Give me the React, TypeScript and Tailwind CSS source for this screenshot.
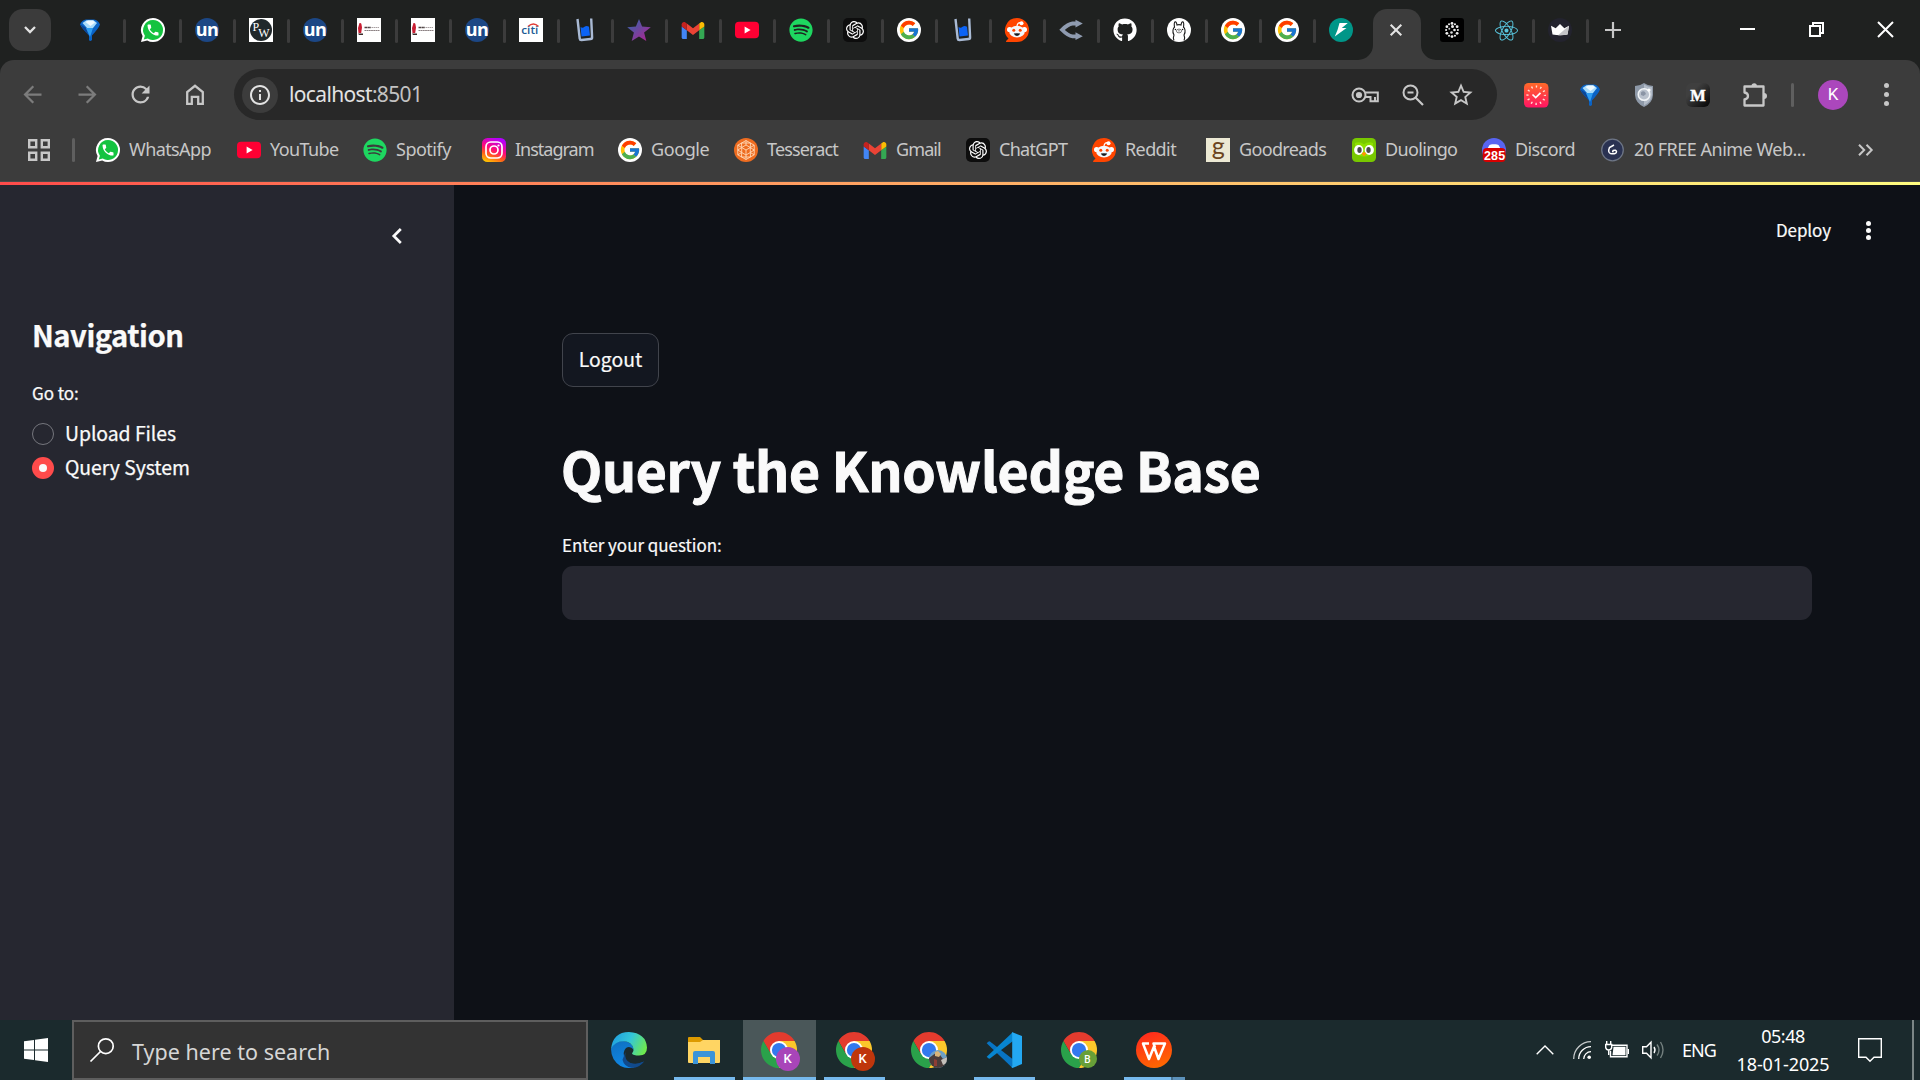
import React, { useId } from "react";
import { FcGoogle } from "react-icons/fc";
import { FaSpotify, FaGithub, FaReact } from "react-icons/fa";
import { SiOpenai } from "react-icons/si";
import {
  MdArrowBack,
  MdArrowForward,
  MdRefresh,
  MdInfoOutline,
  MdStarBorder,
} from "react-icons/md";

function Svg({ children, className = "size-6", box = "0 0 24 24" }: { children: React.ReactNode; className?: string; box?: string }) {
  return (
    <svg viewBox={box} className={`${className} shrink-0 overflow-visible`} fill="none">
      {children}
    </svg>
  );
}

function Diamond() {
  return (
    <Svg>
      <path d="M2 6.500Q4 2 8 1.500h8Q20 2 22 6.500q-1.500 4-8 11v4.500q-2 2-3 0v-4.500Q4 10.500 2 6.500" fill="#0a62c4" />
      <path d="M2.500 6.500 8 10l4 11-1-3.500Q4 10.500 2.500 6.500" fill="#0c4696" />
      <path d="M8 10h7l-3 9z" fill="#2d9cf0" />
      <path d="M4.500 5 8.500 2.300h7L19 5l-4 5H9z" fill="#a9dcfb" />
      <path d="M7.500 4 10 2.500h5L17 4.500 12.500 8z" fill="#eef9ff" />
    </Svg>
  );
}

function WhatsApp() {
  return (
    <Svg>
      <path d="M12 0a12 12 0 0 1 0 24q-3.200 0-5.800-1.500L0 24l1.600-6A12 12 0 0 1 12 0" fill="#fff" />
      <path d="M12 2a10 10 0 1 1-5.200 18.500L2.800 21.500 3.900 17.700A10 10 0 0 1 12 2" fill="#14c340" />
      <path
        transform="translate(4.700 4.700) scale(.61)"
        fill="#fff"
        d="M6.620 10.790c1.440 2.830 3.760 5.140 6.590 6.590l2.200-2.200c.27-.27.67-.36 1.020-.24 1.120.37 2.330.57 3.570.57.55 0 1 .45 1 1V20c0 .55-.45 1-1 1-9.390 0-17-7.610-17-17 0-.55.45-1 1-1h3.500c.55 0 1 .45 1 1 0 1.250.2 2.450.57 3.570.11.35.03.74-.25 1.020l-2.200 2.200z"
      />
    </Svg>
  );
}

function Un() {
  return (
    <div className="flex size-6 items-center justify-center rounded-full bg-[#1c4785] font-['Open_Sans',sans-serif] text-[18px] leading-none font-bold tracking-[-0.5px] text-white">
      <span className="-mt-[3px]">un</span>
    </div>
  );
}

function Pw() {
  return (
    <div className="flex size-6 items-center justify-center bg-white">
      <div className="flex size-[22px] items-start justify-center rounded-full bg-[#20282b] font-['Liberation_Serif',serif] text-[12px] leading-none text-white">
        <span className="mt-[2px]">P</span>
        <span className="mt-[8px] -ml-px">W</span>
      </div>
    </div>
  );
}

function Institute() {
  return (
    <Svg>
      <path d="M0 0h24v24H0z" fill="#fff" />
      <path d="M2.500 5q2-.5 2 1.500l.5 3-.8 5.500H1.500l-.5-5z" fill="#c81e33" />
      <path d="M1 15.500h5V17H2z" fill="#3a2a2a" />
      <path d="M7.500 9.500h6.500" stroke="#4f4446" strokeWidth="1.600" strokeDasharray="2.500 .4" />
      <path d="M14.500 9.500h8" stroke="#a9a0a2" strokeWidth="1" strokeDasharray="1.500 .5" />
      <path d="M7.500 12.500h15" stroke="#8a7f81" strokeWidth="1.200" strokeDasharray="1.800 .4" />
    </Svg>
  );
}

function Citi() {
  return (
    <Svg>
      <path d="M0 0h24v24H0z" fill="#fff" />
      <path d="M9 8.500q5.500-5 10.500 0" stroke="#e23b34" strokeWidth="1.500" />
      <text x="2.300" y="16" fill="#1d5b96" fontFamily="Open Sans, sans-serif" fontSize="11" fontWeight="600" textLength="17" lengthAdjust="spacingAndGlyphs">citi</text>
    </Svg>
  );
}

function Cup() {
  return (
    <Svg>
      <path d="m4.500 1 2.200 19.500q.2 1.600 1.800 1.500l9-1q1.700-.2 1.600-1.800L18.200.5" stroke="#a9bad4" strokeWidth="2.400" />
      <path d="M7.500 9q2 1.500 4-.2t4.500 0L17 17.500l-8.500 1z" fill="#0c63f5" />
    </Svg>
  );
}

function StarTab() {
  const id = useId();
  return (
    <Svg>
      <defs>
        <linearGradient id={id} x1="0" y1="0" x2=".9" y2="1">
          <stop offset=".15" stopColor="#3f5fa8" />
          <stop offset="1" stopColor="#b02391" />
        </linearGradient>
      </defs>
      <path d="m12 1 3.100 7.600 8.700.6-6.700 5.300 2.200 8.500L12 18.400 4.700 23l2.200-8.500L.2 9.200l8.700-.6z" fill={`url(#${id})`} />
    </Svg>
  );
}

function Gmail() {
  return (
    <Svg className="h-[17px] w-6" box="52 42 88 66">
      <path fill="#4285f4" d="M58 108h14V74L52 59v43c0 3.320 2.690 6 6 6" />
      <path fill="#34a853" d="M120 108h14c3.320 0 6-2.690 6-6V59l-20 15" />
      <path fill="#fbbc04" d="M120 48v26l20-15v-8c0-7.420-8.470-11.650-14.400-7.200" />
      <path fill="#ea4335" d="M72 74V48l24 18 24-18v26L96 92" />
      <path fill="#c5221f" d="M52 51v8l20 15V48l-5.600-4.200c-5.940-4.450-14.400-.22-14.400 7.200" />
    </Svg>
  );
}

function YouTube() {
  return (
    <Svg>
      <rect y="3.700" width="24" height="16.600" rx="4" fill="#ff0033" />
      <path d="m9.600 8.600 6 3.400-6 3.400z" fill="#fff" />
    </Svg>
  );
}

const Spotify = () => <FaSpotify className="size-6 shrink-0 text-[#1ed760]" />;

const OpenAi = () => (
  <div className="flex size-6 shrink-0 items-center justify-center rounded-[5px] bg-[#0d0d0d]">
    <SiOpenai className="size-[18px] text-white" />
  </div>
);

const Google = () => (
  <div className="flex size-6 shrink-0 items-center justify-center rounded-full bg-white">
    <FcGoogle className="size-[22px]" />
  </div>
);

function Reddit() {
  return (
    <Svg>
      <path d="M12 0a12 12 0 1 1 0 24H1.500q-1-.3-.2-1.200L3.500 20.500A12 12 0 0 1 12 0" fill="#ff4500" />
      <circle cx="4.600" cy="11.500" r="2.600" fill="#fff" />
      <circle cx="19.400" cy="11.500" r="2.600" fill="#fff" />
      <path d="M12 8q.5-4 4-3.200" stroke="#fff" strokeWidth="1.200" />
      <circle cx="16.500" cy="5.200" r="2" fill="#fff" />
      <ellipse cx="12" cy="13.700" rx="7.800" ry="5.900" fill="#f4f7fa" />
      <circle cx="8.800" cy="12.300" r="1.500" fill="#ff4500" />
      <circle cx="15.200" cy="12.300" r="1.500" fill="#ff4500" />
      <path d="M8.800 15.600q3.200-.9 6.400 0-.8 2.300-3.200 2.300t-3.200-2.300" fill="#16191d" />
    </Svg>
  );
}

function Fork() {
  return (
    <Svg>
      <path d="M18 5.500h-4.500Q9 6 3 11.800 9 18 13.500 18.300H18" stroke="#8f9bb0" strokeWidth="3.800" />
      <path d="m16.500 1.800 7.300 3.700-7.300 4zM16.500 14.300l7.300 4-7.300 3.800z" fill="#8f9bb0" />
    </Svg>
  );
}

const GitHub = () => <FaGithub className="size-6 text-white" />;

function Llama() {
  return (
    <Svg>
      <circle cx="12" cy="12" r="12" fill="#fff" />
      <path d="M7 22.500q-1.200-3 0-5.500Q5.500 14.500 6 12q.5-2.200 1.500-2.700-.7-4.800.6-5.500Q9.500 3.500 10 7q2-.8 4 0 .5-3.500 1.900-3.200 1.300.7.6 5.500 1 .5 1.500 2.700.5 2.500-1 5 1.200 2.500 0 5.500" stroke="#181818" strokeWidth="1.100" />
      <ellipse cx="12" cy="13" rx="2.600" ry="1.900" stroke="#444" strokeWidth=".7" />
      <circle cx="12" cy="12.800" r=".6" fill="#111" />
      <circle cx="8.400" cy="11.500" r=".7" fill="#111" />
      <circle cx="15.600" cy="11.500" r=".7" fill="#111" />
    </Svg>
  );
}

function Flash() {
  return (
    <Svg>
      <circle cx="12" cy="12" r="12" fill="#009688" />
      <path d="M10.500 5h8.300l-6 5h4.700L5.800 18.500 8.500 12z" fill="#fff" />
    </Svg>
  );
}

function DotsBrain() {
  const ring = [0, 1, 2, 3, 4, 5, 6, 7, 8, 9, 10, 11];
  return (
    <Svg>
      <rect width="24" height="24" rx="3" fill="#000" />
      {ring.map((i) => (
        <circle key={i} cx={12 + 5.900 * Math.cos((i * Math.PI) / 6)} cy={12 + 6.600 * Math.sin((i * Math.PI) / 6)} r={i % 2 ? 1.400 : 1.050} fill="#eee" />
      ))}
      <circle cx="12.500" cy="8.500" r="1.500" fill="#eee" />
      <circle cx="9.300" cy="10.800" r="1" fill="#ccc" />
      <circle cx="14.500" cy="12" r="1.300" fill="#eee" />
      <circle cx="11.500" cy="14.500" r="1.300" fill="#ddd" />
    </Svg>
  );
}

const ReactTab = () => <FaReact className="size-[23px] text-[#58c4dc]" />;

function Crown() {
  return (
    <Svg>
      <circle cx="12" cy="12" r="12" fill="#23232e" />
      <path d="m3 7.800 4.700 2.500L12 6l4.300 4.300L21 7.800l-1.500 8.700Q12 18 4.500 16.500z" fill="#fff" />
      <path d="M10 17.200 21 7.800l-1.500 8.700q-4 1-9.500.7" fill="#c4c4c8" />
    </Svg>
  );
}

function Instagram() {
  const id = useId();
  return (
    <Svg>
      <defs>
        <linearGradient id={id} x1=".2" y1="1" x2=".6" y2="0">
          <stop offset="0" stopColor="#ffc800" />
          <stop offset=".3" stopColor="#ff5a1c" />
          <stop offset=".55" stopColor="#ff0a78" />
          <stop offset="1" stopColor="#b400ff" />
        </linearGradient>
      </defs>
      <rect width="24" height="24" rx="5.500" fill={`url(#${id})`} />
      <rect x="4" y="4" width="16" height="16" rx="4.700" stroke="#fff" strokeWidth="1.700" />
      <circle cx="12" cy="12" r="4" stroke="#fff" strokeWidth="1.700" />
      <circle cx="16.500" cy="7.500" r="1.100" fill="#fff" />
    </Svg>
  );
}

function Tesseract() {
  return (
    <Svg>
      <circle cx="12" cy="12" r="12" fill="#ee6c20" />
      <g stroke="#ffd9b8" strokeWidth=".9">
        <path d="m12 2.500 8.200 4.700v9.600L12 21.500l-8.200-4.700V7.200z" />
        <path d="m12 7 4.300 2.500v5L12 17l-4.300-2.500v-5zM12 2.500V7M20.200 7.200l-3.900 2.300M20.200 16.800l-3.900-2.300M12 21.500V17M3.800 16.800l3.900-2.300M3.800 7.200l3.900 2.300M7.700 9.500 12 12l4.300-2.500M12 12v5" />
        <path d="m7.500 5 9 0M7.500 19h9M3.800 12l4-2.500M3.800 12l4 2.500M20.200 12l-4-2.500M20.200 12l-4 2.500M7.500 5l.2 4.500M16.500 5l-.2 4.500M7.500 19l.2-4.500M16.500 19l-.2-4.500" />
      </g>
    </Svg>
  );
}

const Goodreads = () => (
  <div className="flex size-6 items-center justify-center bg-[#ece9d4] font-['Lato',sans-serif] text-[25px] leading-none text-[#6b4420]">
    <span className="-mt-[9px]">g</span>
  </div>
);

function Duolingo() {
  return (
    <Svg>
      <rect width="24" height="24" rx="4.500" fill="#78c800" />
      <path d="M3 5q5-2 9 1.500Q16 3 21 5v9q-4 5-9 4.500Q7 19 3 14z" fill="#8ee000" />
      <ellipse cx="6.700" cy="12" rx="4.600" ry="4.900" fill="#fff" />
      <ellipse cx="17.300" cy="12" rx="4.600" ry="4.900" fill="#fff" />
      <ellipse cx="7.500" cy="12" rx="2.200" ry="3" fill="#4b4b4b" />
      <ellipse cx="16.500" cy="12" rx="2.200" ry="3" fill="#4b4b4b" />
      <path d="M9.500 15.500q2.500-3 5 0L12 18.500z" fill="#ff9600" />
    </Svg>
  );
}

function Discord() {
  return (
    <Svg>
      <circle cx="12" cy="12" r="12" fill="#5865f2" />
      <path d="M5.500 10.500 7.500 7q2-1 3-.8h3q1-.2 3 .8l2 3.500z" fill="#fff" />
      <rect x=".8" y="10" width="22.800" height="14" rx="4" fill="#d80000" />
      <text x="2" y="21.800" fill="#fff" fontFamily="Liberation Sans, sans-serif" fontSize="12.500" fontWeight="700" textLength="20.500">285</text>
    </Svg>
  );
}

function Anime() {
  return (
    <Svg>
      <circle cx="11.500" cy="12" r="10.800" fill="#2a3252" stroke="#6d7585" strokeWidth="1.300" />
      <path d="M13 7 8.500 9.500q-2 5 1 6 6 1 6-1.800-.5-2.200-3.300-1.200-1.200 1 .3 1.500" stroke="#fff" strokeWidth="1.500" />
    </Svg>
  );
}

/* Browser chrome */

const leadingTabs = [WhatsApp, Un, Pw, Un, Institute, Institute, Un, Citi, Cup, StarTab, Gmail, YouTube, Spotify, OpenAi, Google, Cup, Reddit, Fork, GitHub, Llama, Google, Google];
const trailingTabs = [DotsBrain, ReactTab, Crown];

function Tab({ icon: Icon }: { icon: React.ComponentType }) {
  return (
    <div className="flex h-6 w-[54px] shrink-0 items-center justify-between">
      <div className="ml-[13px] flex size-6 items-center justify-center">
        <Icon />
      </div>
      <div className="mt-[2px] h-6 w-[3px] rounded-sm bg-[#3c3c3c]" />
    </div>
  );
}

function TabStrip() {
  return (
    <div className="flex h-[60px] bg-[#1f2120]">
      <div className="mt-[9px] ml-[9px] flex size-[42px] shrink-0 items-center justify-center rounded-[14px] bg-[#3b3b3b]">
        <Svg className="h-2 w-3" box="0 0 12 8">
          <path d="m1 1 5 5 5-5" stroke="#e3e3e3" strokeWidth="2.300" />
        </Svg>
      </div>
      <div className="flex h-[60px] items-center">
        <div className="flex w-[75px] items-center justify-between pl-[27px]">
          <Diamond />
          <div className="mt-[2px] h-6 w-[3px] rounded-sm bg-[#3c3c3c]" />
        </div>
        <div className="w-[2px]" />
        {leadingTabs.map((icon, i) => (
          <Tab key={i} icon={icon} />
        ))}
        <div className="ml-[13px] size-6">
          <Flash />
        </div>
      </div>
      <div className="ml-[5px] flex items-end">
        <Svg className="size-[15px]" box="0 0 15 15">
          <path d="M0 15A15 15 0 0 0 15 0v15z" fill="#3c3c3c" />
        </Svg>
        <div className="flex h-[51px] w-12 items-center justify-center rounded-t-[14px] bg-[#3c3c3c] pr-[2px] pb-[9px]">
          <Svg className="size-3" box="0 0 12 12">
            <path d="m.7.700 10.600 10.600M11.300.700.700 11.300" stroke="#e3e3e3" strokeWidth="2.100" />
          </Svg>
        </div>
        <Svg className="size-[15px]" box="0 0 15 15">
          <path d="M15 15A15 15 0 0 1 0 0v15z" fill="#3c3c3c" />
        </Svg>
      </div>
      <div className="-ml-[9px] flex h-[60px] items-center">
        {trailingTabs.map((icon, i) => (
          <Tab key={i} icon={icon} />
        ))}
        <Svg className="ml-4 size-4" box="0 0 16 16">
          <path d="M8 0v16M0 8h16" stroke="#c7c7c7" strokeWidth="2.200" />
        </Svg>
      </div>
      <div className="ml-auto flex h-[58px] items-center">
        <div className="flex w-[69px] justify-center">
          <div className="h-[2px] w-[15px] bg-white" />
        </div>
        <div className="flex w-[69px] justify-center">
          <Svg className="size-[15px]" box="0 0 15 15">
            <path d="M1 4h10v10H1zM4 4V1h10v10h-3" stroke="#fff" strokeWidth="2" />
          </Svg>
        </div>
        <div className="flex w-[69px] justify-center">
          <Svg className="size-[15px]" box="0 0 15 15">
            <path d="m0 0 15 15M15 0 0 15" stroke="#fff" strokeWidth="2" />
          </Svg>
        </div>
      </div>
    </div>
  );
}

function Extension({ children }: { children: React.ReactNode }) {
  return <div className="flex w-[54px] items-center justify-center">{children}</div>;
}

function Toolbar() {
  const red = useId();
  const med = useId();
  return (
    <div className="flex h-[69px] items-center">
      <div className="flex w-[234px] pl-[6px] text-[#c7c7c7]">
        <div className="flex w-[54px] justify-center pr-px text-[#7c7c7c]"><MdArrowBack size={27} /></div>
        <div className="flex w-[54px] justify-center text-[#7c7c7c]"><MdArrowForward size={27} /></div>
        <div className="flex w-[54px] justify-center pr-px"><MdRefresh size={27} /></div>
        <div className="flex w-[54px] items-center justify-center">
          <Svg className="h-[21px] w-[18px]" box="0 0 18 21">
            <path d="M1.200 19.800V8L9 1.800 16.800 8v11.800h-4.600v-7H5.800v7z" stroke="#c7c7c7" strokeWidth="2.300" />
          </Svg>
        </div>
      </div>
      <div className="flex h-[51px] w-[1263px] items-center rounded-full bg-[#282828] pl-2">
        <div className="flex size-9 items-center justify-center rounded-full bg-[#3c3c3c] text-[#e3e3e3]">
          <MdInfoOutline size={24} />
        </div>
        <div className="mb-px ml-[11px] font-['Noto_Sans',sans-serif] text-[21px] leading-6 tracking-[-0.65px] text-[#e3e3e3]">
          localhost<span className="text-[#c2c2c2]">:8501</span>
        </div>
        <div className="mr-3 ml-auto flex items-center">
          <div className="flex w-12 justify-center">
            <Svg className="h-4 w-7" box="0 0 28 16">
              <circle cx="8" cy="8" r="6.500" stroke="#c7c7c7" strokeWidth="2" />
              <circle cx="8" cy="8" r="3.100" fill="#c7c7c7" />
              <path d="M14.300 5.500h12.500v8.800h-2.700M14.500 10h5v4.300h4.500V10" stroke="#c7c7c7" strokeWidth="2" />
            </Svg>
          </div>
          <div className="flex w-12 justify-center">
            <Svg className="size-[22px]" box="0 0 22 22">
              <circle cx="8.500" cy="8.500" r="7" stroke="#c7c7c7" strokeWidth="2" />
              <path d="m13.500 13.500 7.500 7.500M5.500 8.500h6" stroke="#c7c7c7" strokeWidth="2.200" />
            </Svg>
          </div>
          <div className="flex w-12 justify-center text-[#c7c7c7]"><MdStarBorder size={28} /></div>
        </div>
      </div>
      <div className="flex items-center pl-3">
        <Extension>
          <Svg>
            <defs>
              <linearGradient id={red} x1="0" y1="0" x2="0" y2="1">
                <stop offset="0" stopColor="#ff6a28" />
                <stop offset="1" stopColor="#ff1464" />
              </linearGradient>
            </defs>
            <rect width="24.500" height="24.500" rx="4.500" fill={`url(#${red})`} />
            <circle cx="12.200" cy="12.200" r="8.700" stroke="#ffe3d8" strokeWidth="2.200" strokeDasharray="1.400 3.155" strokeDashoffset=".7" />
            <path d="m8.500 11.500 3.200 3 4.800-4.700" stroke="#fff" strokeWidth="1.700" />
          </Svg>
        </Extension>
        <Extension><Diamond /></Extension>
        <Extension>
          <Svg>
            <path d="M12 0q4 3 9 3v9q-.5 8-9 12-8.500-4-9-12V3q5 0 9-3" fill="#8e99a8" />
            <path d="M12 1.500q4 2.500 8 2.700V12q-.5 6.500-8 10.500z" fill="#b3bcc8" />
            <circle cx="12" cy="11.500" r="5.800" stroke="#f1f4f7" strokeWidth="1.500" fill="#b9c1cc" />
            <path d="M9 9.500q2-2 4-.5l1 2-2.500 2-2.500-1z" fill="#8b95a5" />
            <circle cx="17" cy="7" r="1.600" fill="#fff" />
          </Svg>
        </Extension>
        <Extension>
          <Svg>
            <defs>
              <linearGradient id={med} x1="0" y1="0" x2="1" y2="1">
                <stop offset=".3" stopColor="#3f3f3f" />
                <stop offset=".9" stopColor="#0c0c0c" />
              </linearGradient>
            </defs>
            <rect width="24" height="24" rx="6" fill={`url(#${med})`} />
            <text x="4.300" y="18" fill="#fff" stroke="#fff" strokeWidth=".5" fontFamily="Liberation Serif, serif" fontSize="17.500" fontWeight="700" textLength="15.500" lengthAdjust="spacingAndGlyphs">M</text>
          </Svg>
        </Extension>
        <div className="ml-[17px] flex">
          <Svg className="size-[26px]" box="0 0 26 26">
            <path d="M2.500 4.500h19V23.500h-19V17.500q3.500-.7 3.500-3.500t-3.500-3.500z" stroke="#c7c7c7" strokeWidth="2.300" strokeLinejoin="round" />
            <path d="M9.500 4a2.700 2.700 0 0 1 5.400 0zM22 11a3 3 0 0 1 0 6z" fill="#c7c7c7" />
          </Svg>
        </div>
        <div className="ml-[23px] h-6 w-[3px] rounded-sm bg-[#5f5f5f]" />
        <div className="ml-6 flex size-[30px] items-center justify-center rounded-full bg-[#ab47bc] font-['Roboto',sans-serif] text-[17px] text-white">K</div>
        <div className="ml-[36px] flex flex-col gap-1">
          <div className="size-[5px] rounded-full bg-[#c7c7c7]" />
          <div className="size-[5px] rounded-full bg-[#c7c7c7]" />
          <div className="size-[5px] rounded-full bg-[#c7c7c7]" />
        </div>
      </div>
    </div>
  );
}

const bookmarks: { icon: React.ComponentType; label: string; width: string }[] = [
  { icon: WhatsApp, label: "WhatsApp", width: "w-[141px] tracking-[-0.6px]" },
  { icon: YouTube, label: "YouTube", width: "w-[126px] tracking-[-0.6px]" },
  { icon: Spotify, label: "Spotify", width: "w-[119px] tracking-[-0.5px]" },
  { icon: Instagram, label: "Instagram", width: "w-[136px] tracking-[-1px]" },
  { icon: Google, label: "Google", width: "w-[116px] tracking-[-0.4px]" },
  { icon: Tesseract, label: "Tesseract", width: "w-[129px] tracking-[-0.85px]" },
  { icon: Gmail, label: "Gmail", width: "w-[103px] tracking-[-0.9px]" },
  { icon: OpenAi, label: "ChatGPT", width: "w-[126px] tracking-[-0.7px]" },
  { icon: Reddit, label: "Reddit", width: "w-[114px] tracking-[-0.6px]" },
  { icon: Goodreads, label: "Goodreads", width: "w-[146px] tracking-[-0.65px]" },
  { icon: Duolingo, label: "Duolingo", width: "w-[130px] tracking-[-0.65px]" },
  { icon: Discord, label: "Discord", width: "w-[119px] tracking-[-0.6px]" },
  { icon: Anime, label: "20 FREE Anime Web...", width: "w-[256px] tracking-[-0.5px]" },
];

function BookmarksBar() {
  return (
    <div className="flex h-[42px] items-center">
      <Svg className="ml-7 size-[22px]" box="0 0 22 22">
        <path d="M1.200 1.200h7v7h-7zM13.800 1.200h7v7h-7zM1.200 13.800h7v7h-7zM13.800 13.800h7v7h-7z" stroke="#c7c7c7" strokeWidth="2.400" />
      </Svg>
      <div className="ml-[22px] h-6 w-[3px] rounded-sm bg-[#5f5f5f]" />
      <div className="ml-[21px] flex items-center font-['Noto_Sans',sans-serif] text-[18px] leading-6 text-[#c7c7c7]">
        {bookmarks.map(({ icon: Icon, label, width }) => (
          <div key={label} className={`${width} flex h-6 shrink-0 items-center gap-[9px] whitespace-nowrap`}>
            <Icon />
            <span className="pb-[2px]">{label}</span>
          </div>
        ))}
      </div>
      <Svg className="ml-px h-3 w-4" box="0 0 16 12">
        <path d="m1 .800 5.200 5.200L1 11.200M8.500.800l5.200 5.200-5.200 5.200" stroke="#c7c7c7" strokeWidth="2" />
      </Svg>
    </div>
  );
}

/* Application page */

function Radio({ label, checked }: { label: string; checked: boolean }) {
  return (
    <div className="flex h-[34px] items-center gap-[11px]">
      {checked ? (
        <div className="mt-px flex size-[22px] items-center justify-center rounded-full bg-[#ff4b4b]">
          <div className="size-2 rounded-full bg-[#fafafa]" />
        </div>
      ) : (
        <div className="mt-px size-[22px] rounded-full border border-[#75767d]" />
      )}
      <span className="text-[19.400px] leading-[34px]">{label}</span>
    </div>
  );
}

function Page() {
  return (
    <div className="flex h-[835px] font-['Noto_Sans_CJK_SC',sans-serif] text-[#fafafa]">
      <aside className="w-[454px] bg-[#262730] pl-8 [-webkit-text-stroke:0.25px_#fafafa]">
        <div className="flex justify-end pt-[43px] pr-[52px]">
          <Svg className="h-4 w-[10px]" box="0 0 10 16">
            <path d="M8.800 1 1.800 8l7 7" stroke="#fafafa" strokeWidth="2.700" />
          </Svg>
        </div>
        <h2 className="mt-[70px] text-[29.200px] leading-10 font-semibold tracking-[-0.5px]">Navigation</h2>
        <div className="mt-[27px] text-[17px] leading-6 tracking-[-0.05px]">Go to:</div>
        <div className="mt-[11px] tracking-[-0.05px]">
          <Radio label="Upload Files" checked={false} />
          <Radio label="Query System" checked />
        </div>
      </aside>
      <main className="flex-1 bg-[#0e1117]">
        <div className="flex h-[148px] items-start justify-end pt-[33px] pr-[49px]">
          <span className="text-[17px] leading-6 tracking-[-0.1px] [-webkit-text-stroke:0.2px_#fafafa]">Deploy</span>
          <div className="mt-[3px] ml-[35px] flex flex-col gap-[2px]">
            <div className="size-[5px] rounded-full bg-[#fafafa]" />
            <div className="size-[5px] rounded-full bg-[#fafafa]" />
            <div className="size-[5px] rounded-full bg-[#fafafa]" />
          </div>
        </div>
        <div className="pr-[108px] pl-[108px]">
          <button className="flex h-[54px] w-[97px] items-center justify-center rounded-[11px] border border-[#41444c] bg-[#131720] pb-[2px] text-[19.400px] leading-6 [-webkit-text-stroke:0.2px_#fafafa]">
            Logout
          </button>
          <h1 className="mt-[46px] -ml-px text-[53.500px] leading-[72px] font-bold tracking-[-0.25px] [-webkit-text-stroke:1px_#fafafa]">Query the Knowledge Base</h1>
          <div className="mt-[28px] text-[17px] leading-6 tracking-[-0.04px] [-webkit-text-stroke:0.2px_#fafafa]">Enter your question:</div>
          <div className="mt-[9px] h-[54px] rounded-[11px] bg-[#262730]" />
        </div>
      </main>
    </div>
  );
}

/* Taskbar */

function Chrome() {
  return (
    <Svg className="size-9" box="0 0 48 48">
      <path d="M44.780 12A24 24 0 0 0 3.220 12L13.600 30 24 24V12z" fill="#e33b2e" />
      <path d="M3.220 12A24 24 0 0 0 24 48l10.390-18L24 24 13.600 30z" fill="#2aa14a" />
      <path d="M24 48A24 24 0 0 0 44.780 12H24v12l10.390 6z" fill="#fcc72b" />
      <circle cx="24" cy="24" r="12" fill="#fff" />
      <circle cx="24" cy="24" r="9.500" fill="#3279ee" />
    </Svg>
  );
}

function ChromeBadge({ children }: { children: React.ReactNode }) {
  return (
    <div className="relative size-9">
      <Chrome />
      {children}
    </div>
  );
}

function Edge() {
  const top = useId();
  const side = useId();
  return (
    <Svg className="size-9" box="0 0 36 36">
      <defs>
        <linearGradient id={top} x1="0" y1=".3" x2="1" y2=".6">
          <stop offset="0" stopColor="#1f9fe0" />
          <stop offset=".5" stopColor="#34c6d8" />
          <stop offset="1" stopColor="#6fea4c" />
        </linearGradient>
        <linearGradient id={side} x1="0" y1="0" x2=".3" y2="1">
          <stop offset="0" stopColor="#0f6fc0" />
          <stop offset="1" stopColor="#1087e4" />
        </linearGradient>
      </defs>
      <path d="M14 14q-5 8 1 15 7 6 18 .5-5 6.500-15 6.500-9-1-13-8z" fill="#114a8b" />
      <path d="M0 17Q3 9 12 9q10 1 11 9-4-5-8-2-4 4-1 11 4 7.500 12 7-4 2-8 2Q8 36 2.500 27 0 22 0 17" fill={`url(#${side})`} />
      <path d="M14.500 20q-1.500 8 5 11 6 2 12-1l1.500-.5q-5 6.500-12 6.300-8-.8-9.500-8z" fill="#114a8b" />
      <path d="M0 17Q2 0 18 0q17 1 18 15.500 0 8-8 8-6 0-7-2 2-2 1.500-4.500Q21 9.500 12 9.300 4 9.500 0 17" fill={`url(#${top})`} />
    </Svg>
  );
}

function Folder() {
  return (
    <Svg className="h-[27px] w-8" box="0 0 32 27">
      <path d="M0 1q0-1 1-1h11l3 3v4H0z" fill="#dd9a00" />
      <path d="M0 5h12l3-2h17v22q0 1-1 1H1q-1 0-1-1z" fill="#ffd563" />
      <path d="M5 16q0-2 2-2h18q2 0 2 2v11h-5v-7H10v7H5z" fill="#3c94d8" />
    </Svg>
  );
}

function VsCode() {
  return (
    <Svg className="size-9" box="0 0 36 36">
      <path d="M.7 11.300 2.300 9.700q1-.7 2 0L26.500 27v9z" fill="#0874c4" />
      <path d="m.7 24.700 1.600 1.600q1 .7 2 0L27 9V0z" fill="#0785d0" />
      <path d="M26.500.3 36 4v28l-9.500 4q-1.500-.6-.3-2V2q-1-.9.300-1.700" fill="#23a8f2" />
    </Svg>
  );
}

function Wps() {
  const id = useId();
  return (
    <Svg className="size-9" box="0 0 36 36">
      <defs>
        <linearGradient id={id} x1=".3" y1="0" x2=".7" y2="1">
          <stop offset="0" stopColor="#ff2a1d" />
          <stop offset="1" stopColor="#ff6a00" />
        </linearGradient>
      </defs>
      <circle cx="18" cy="18" r="18" fill={`url(#${id})`} />
      <path d="M13 11.500H7l6 15.500 5-12.500 4.500 12.500L29 11.500H17.500l1.500 4" stroke="#fff" strokeWidth="2.500" strokeLinejoin="round" />
    </Svg>
  );
}

function Task({ children, active, open }: { children: React.ReactNode; active?: boolean; open?: boolean }) {
  return (
    <div className="flex h-[60px] w-[75px] justify-center">
      <div className={active ? "relative flex h-full w-[73px] items-center justify-center bg-[#4a5759] pr-[2px]" : "relative flex h-full w-[61px] items-center justify-center pr-[2px]"}>
        {children}
        {(active || open) && <div className="absolute inset-x-0 bottom-0 h-[3px] bg-[#76b9ed]" />}
      </div>
    </div>
  );
}

function Taskbar() {
  return (
    <div className="flex h-[60px] items-center bg-[#1b2a2d] font-['Noto_Sans',sans-serif] text-white">
      <Svg className="ml-6 size-6">
        <path d="M0 3.300 10 2v9.500H0zM11 1.800 24 0v11.500H11zM0 12.500h10V22L0 20.700zM11 12.500h13V24l-13-1.800z" fill="#fff" />
      </Svg>
      <div className="ml-6 flex h-[60px] w-[516px] items-center border-2 border-[#5e5e5e] bg-[#333] pl-4">
        <Svg>
          <circle cx="15.800" cy="8.200" r="7.400" stroke="#fff" strokeWidth="1.700" />
          <path d="M10.500 13.500.5 23.500" stroke="#fff" strokeWidth="1.700" />
        </Svg>
        <span className="mt-[3px] ml-[18px] text-[21.500px] leading-7 tracking-[0.02px] text-[#d6d6d6]">Type here to search</span>
      </div>
      <div className="ml-1 flex">
        <Task><Edge /></Task>
        <Task open><Folder /></Task>
        <Task active>
          <ChromeBadge>
            <div className="absolute top-[15px] left-[15px] flex size-6 items-center justify-center rounded-full bg-[#a845b9] font-['Roboto',sans-serif] text-[13px] font-medium">K</div>
          </ChromeBadge>
        </Task>
        <Task open>
          <ChromeBadge>
            <div className="absolute top-[15px] left-[15px] flex size-6 items-center justify-center rounded-full bg-[#bf360c] font-['Roboto',sans-serif] text-[13px] font-medium">K</div>
          </ChromeBadge>
        </Task>
        <Task>
          <ChromeBadge>
            <div className="absolute right-0 bottom-0 size-[18px] overflow-hidden rounded-full bg-[#6d9fc4]">
              <Svg className="size-[18px]" box="0 0 18 18">
                <path d="M0 8 4 5l3-2 4 2 3 4 4-2v11H0z" fill="#4a3c3a" />
                <path d="m6 2 3-1 3 3-2 3-4-1z" fill="#d9b478" />
                <path d="m12 10 6-3v6l-4 2z" fill="#c4c0ba" />
                <path d="m5 9 3 1v6H5z" fill="#8d3d34" />
              </Svg>
            </div>
          </ChromeBadge>
        </Task>
        <Task open><VsCode /></Task>
        <Task>
          <ChromeBadge>
            <div className="absolute right-0 bottom-0 flex size-[18px] items-center justify-center rounded-full bg-[#689f38] font-['Roboto',sans-serif] text-[10px] font-medium">B</div>
          </ChromeBadge>
        </Task>
        <Task open>
          <Wps />
          <div className="absolute right-0 bottom-0 z-10 h-[3px] w-[14px] border-l-2 border-[#47708f] bg-[#5c91ba]" />
        </Task>
      </div>
      <div className="ml-auto flex items-center">
        <Svg className="h-[10px] w-[18px]" box="0 0 18 10">
          <path d="m.7 9.300 8.300-8.300 8.300 8.300" stroke="#fff" strokeWidth="1.400" />
        </Svg>
        <Svg className="ml-[19px] size-[18px]" box="0 0 18 18">
          <g stroke="#fff" strokeWidth="1.300">
            <path d="M.7 18A17.300 17.300 0 0 1 18 .7" opacity=".75" />
            <path d="M5.700 18A12.300 12.300 0 0 1 18 5.700M10.700 18A7.300 7.300 0 0 1 18 10.700" />
          </g>
          <circle cx="16.200" cy="16.200" r="1.800" fill="#fff" />
        </Svg>
        <Svg className="-mt-[2px] ml-[14px] h-[17px] w-6" box="0 0 24 17">
          <path d="M7 4.200h15v11.600H5.500V10" stroke="#fff" strokeWidth="1.400" />
          <path d="M8.500 5.800H20.500v8.400H7.500z" fill="#fff" />
          <path d="M22.700 8H24v5h-1.300z" fill="#fff" />
          <path d="M1.700 0v3.500M5.700 0v3.500M.7 3.500h6v3q-.5 2.500-3 2.500t-3-2.500zM3.700 9v5" stroke="#fff" strokeWidth="1.400" />
        </Svg>
        <Svg className="ml-[13px] h-[18px] w-[22px]" box="0 0 22 18">
          <path d="M.7 5.700h3.800L9 1.200v15.600l-4.500-4.500H.7z" stroke="#fff" strokeWidth="1.400" />
          <path d="M12 6q2 3 0 6" stroke="#fff" strokeWidth="1.400" />
          <path d="M15 3.500q4 5.500 0 11M18.500 1q5 8 0 16" stroke="#74807f" strokeWidth="1.400" />
        </Svg>
        <span className="ml-[18px] w-[34px] text-[18px] tracking-[-1px]">ENG</span>
        <div className="ml-[18px] flex w-[98px] flex-col items-center text-[18px] leading-7 whitespace-nowrap">
          <span className="tracking-[-0.5px]">05:48</span>
          <span className="tracking-[-0.1px]">18-01-2025</span>
        </div>
        <Svg className="ml-[26px] size-6">
          <path d="M.700.700h22.600v18.600H16L12 23.300 8 19.300H.700z" stroke="#fff" strokeWidth="1.400" />
        </Svg>
        <div className="mr-[6px] ml-[30px] h-[60px] w-[2px] bg-[#7b8686]" />
      </div>
    </div>
  );
}

export default function App() {
  return (
    <div className="h-[1080px] w-[1920px] overflow-hidden">
      <div className="bg-[#1f2120]">
        <TabStrip />
        <div className="h-[122px] rounded-t-[14px] border-b border-[#4a4a4a] bg-[#3c3c3c]">
          <Toolbar />
          <BookmarksBar />
        </div>
      </div>
      <div className="h-[3px] bg-gradient-to-r from-[#ff4b4b] to-[#fffd80]" />
      <Page />
      <Taskbar />
    </div>
  );
}
